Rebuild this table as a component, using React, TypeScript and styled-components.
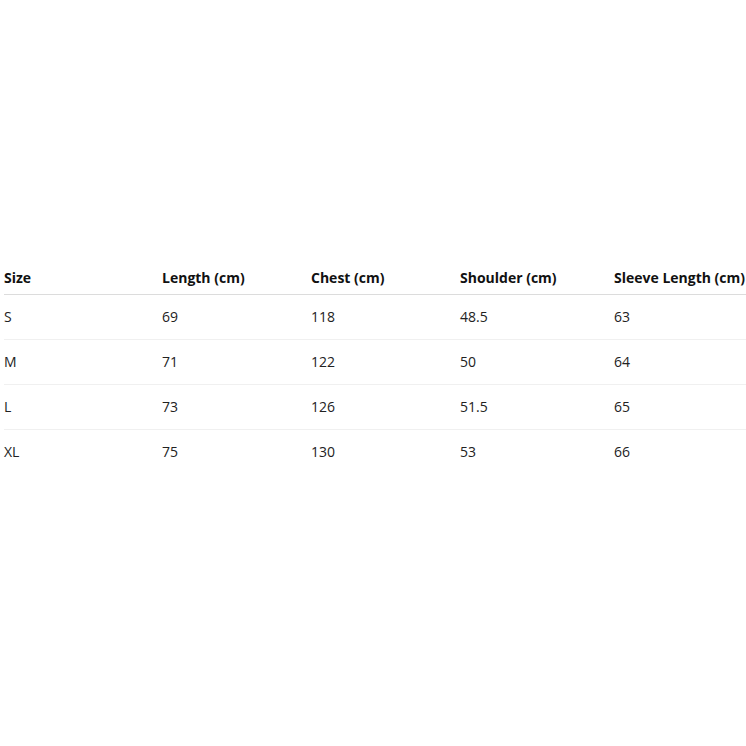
import React from "react";
import styled, { createGlobalStyle } from "styled-components";

const Global = createGlobalStyle`
  html, body { margin: 0; padding: 0; background: #fff; overflow: hidden; }
  body { font-family: "Open Sans", "Noto Sans", "Liberation Sans", sans-serif; }
`;

const Page = styled.div`
  box-sizing: border-box;
  height: 746px;
  display: flex;
  align-items: center;
  padding: 0 0 10px 4px;
  overflow: hidden;
`;

const Table = styled.table`
  border-collapse: collapse;
  table-layout: fixed;
  width: 760px;
  flex: none;
  font-size: 14px;
  color: #1a1a1a;
`;

const Th = styled.th<{ $w: number }>`
  width: ${(p) => p.$w}px;
  text-align: left;
  font-weight: 700;
  color: #111;
  padding: 6px 0;
  line-height: 20px;
  border-bottom: 1px solid #dcdcdc;
  white-space: nowrap;
`;

const Tr = styled.tr<{ $last?: boolean }>`
  border-bottom: ${(p) => (p.$last ? "none" : "1px solid #f0f0f0")};
`;

const Td = styled.td`
  padding: 12px 0;
  line-height: 20px;
  color: #222;
`;

const cols = [
  { label: "Size", w: 158 },
  { label: "Length (cm)", w: 149 },
  { label: "Chest (cm)", w: 149 },
  { label: "Shoulder (cm)", w: 154 },
  { label: "Sleeve Length (cm)", w: 150 },
];

const rows = [
  ["S", "69", "118", "48.5", "63"],
  ["M", "71", "122", "50", "64"],
  ["L", "73", "126", "51.5", "65"],
  ["XL", "75", "130", "53", "66"],
];

export default function App() {
  return (
    <>
      <Global />
      <Page>
        <Table>
          <thead>
            <tr>
              {cols.map((c) => (
                <Th key={c.label} $w={c.w}>
                  {c.label}
                </Th>
              ))}
            </tr>
          </thead>
          <tbody>
            {rows.map((r, i) => (
              <Tr key={r[0]} $last={i === rows.length - 1}>
                {r.map((v, j) => (
                  <Td key={j}>{v}</Td>
                ))}
              </Tr>
            ))}
          </tbody>
        </Table>
      </Page>
    </>
  );
}
